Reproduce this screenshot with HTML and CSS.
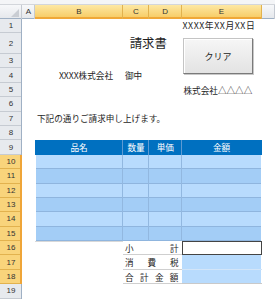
FILE: index.html
```html
<!doctype html>
<html>

<head>
	<meta charset="utf-8">
	<title>請求書</title>
	<link rel="stylesheet" href="styles.css">
</head>

<body>
	<div class="sheet">
		<div class="top-strip"></div>
		<table class="grid">
			<colgroup>
				<col class="w-head"><col class="w-a"><col class="w-b"><col class="w-c"><col class="w-d"><col class="w-e"><col>
			</colgroup>
			<!-- column letters -->
			<tr class="head-row">
				<th class="corner"><svg width="22" height="14" viewBox="0 0 22 14"><polygon points="19,4 19,12 11,12" fill="#c9cdd3"/></svg></th>
				<th>A</th>
				<th class="sel">B</th>
				<th class="sel">C</th>
				<th class="sel">D</th>
				<th class="sel">E</th>
				<th></th>
			</tr>
			<tr>
				<th class="num">1</th><td></td><td></td><td></td><td></td>
				<td class="date">XXXX年XX月XX日</td><td></td>
			</tr>
			<tr class="tall">
				<th class="num">2</th><td></td>
				<td colspan="4" class="title">請求書</td><td></td>
			</tr>
			<tr>
				<th class="num">3</th><td></td><td></td><td></td><td></td><td></td><td></td>
			</tr>
			<tr>
				<th class="num">4</th><td></td>
				<td class="client">XXXX株式会社</td>
				<td colspan="2">御中</td><td></td><td></td>
			</tr>
			<tr>
				<th class="num">5</th><td></td><td></td><td></td><td></td>
				<td>株式会社△△△△</td><td></td>
			</tr>
			<tr>
				<th class="num">6</th><td></td><td></td><td></td><td></td><td></td><td></td>
			</tr>
			<tr>
				<th class="num">7</th><td></td>
				<td colspan="4">下記の通りご請求申し上げます。</td><td></td>
			</tr>
			<tr>
				<th class="num">8</th><td></td><td></td><td></td><td></td><td></td><td></td>
			</tr>
			<!-- invoice table -->
			<tr>
				<th class="num">9</th><td></td>
				<td class="tbl-head">品名</td>
				<td class="tbl-head">数量</td>
				<td class="tbl-head">単価</td>
				<td class="tbl-head last">金額</td><td></td>
			</tr>
			<tr class="light">
				<th class="num sel">10</th><td></td>
				<td class="item first"></td><td class="item"></td><td class="item"></td><td class="item last"></td><td></td>
			</tr>
			<tr class="dark">
				<th class="num sel">11</th><td></td>
				<td class="item first"></td><td class="item"></td><td class="item"></td><td class="item last"></td><td></td>
			</tr>
			<tr class="light">
				<th class="num sel">12</th><td></td>
				<td class="item first"></td><td class="item"></td><td class="item"></td><td class="item last"></td><td></td>
			</tr>
			<tr class="dark">
				<th class="num sel">13</th><td></td>
				<td class="item first"></td><td class="item"></td><td class="item"></td><td class="item last"></td><td></td>
			</tr>
			<tr class="light">
				<th class="num sel">14</th><td></td>
				<td class="item first"></td><td class="item"></td><td class="item"></td><td class="item last"></td><td></td>
			</tr>
			<tr class="dark">
				<th class="num sel">15</th><td></td>
				<td class="item first"></td><td class="item"></td><td class="item"></td><td class="item last"></td><td></td>
			</tr>
			<!-- totals -->
			<tr>
				<th class="num sel">16</th><td></td>
				<td class="under-table"></td>
				<td colspan="2" class="label"><div class="spread"><span>小</span><span>計</span></div></td>
				<td class="active-cell"></td><td></td>
			</tr>
			<tr>
				<th class="num sel">17</th><td></td><td></td>
				<td colspan="2" class="label"><div class="spread"><span>消</span><span>費</span><span>税</span></div></td>
				<td class="total"></td><td></td>
			</tr>
			<tr>
				<th class="num sel">18</th><td></td><td></td>
				<td colspan="2" class="label"><div class="spread"><span>合</span><span>計</span><span>金</span><span>額</span></div></td>
				<td class="total bottom"></td><td></td>
			</tr>
			<tr>
				<th class="num">19</th><td></td><td></td><td></td><td></td><td></td><td></td>
			</tr>
		</table>

		<!-- form button floating over the cells -->
		<div class="btn-clear">クリア</div>
	</div>
</body>

</html>
```

FILE: styles.css
```css
* { margin: 0; padding: 0; box-sizing: border-box; }
body { width: 275px; height: 300px; overflow: hidden; background: #fff; font-family: "Noto Sans CJK JP", sans-serif; font-size: 8.6px; color: #1e1e1e; }
.sheet { position: relative; }
.top-strip { height: 5px; background: #f4f5f7; box-shadow: inset 0 -1px #d3d6db; }

.grid { width: 275px; table-layout: fixed; border-spacing: 0; }
.w-head { width: 22px; }
.w-a { width: 13px; }
.w-b { width: 88px; }
.w-c { width: 26px; }
.w-d { width: 32.5px; }
.w-e { width: 80px; }
.grid tr { height: 14.4px; }
.grid tr.tall { height: 20.6px; }
.grid td, .grid th { padding: 0 2px; white-space: nowrap; font-weight: normal; vertical-align: middle; text-align: left; line-height: 1; }

/* headers */
.head-row { height: 14px !important; }
.head-row th { text-align: center; font-family: "Liberation Sans", sans-serif; font-size: 8px; color: #333; background: linear-gradient(#f7f8fa, #e4e7eb); box-shadow: inset -1px 0 #c5cad2, inset 0 -1px #9fb0c4; }
.head-row th.sel { background: linear-gradient(#fde8a4, #f6c95f); box-shadow: inset -1px 0 #e2b24e, inset 0 -2px #f0a838; }
.head-row th.corner { padding: 0; }
.head-row th.corner svg { display: block; }
.grid th.num { text-align: center; font-family: "Liberation Sans", sans-serif; font-size: 8px; color: #333; background: #e7eaee; box-shadow: inset -1px 0 #9fb0c4, inset 0 -1px #c6cbd2; }
.grid th.num.sel { background: #f9d47b; box-shadow: inset -2px 0 #efa538, inset 0 -1px #e2b24e; }

/* top part */
.date { font-size: 8.8px; letter-spacing: 0.55px; padding-left: 1px !important; }
.title { text-align: center !important; font-size: 12.4px; }
.client { text-align: right !important; padding-right: 10px !important; }

/* invoice table */
.tbl-head { background: #0070c0; color: #fff; text-align: center !important; font-weight: bold; box-shadow: inset -1px 0 #5d9ad3; }
.tbl-head.last { box-shadow: none; }
.item { box-shadow: inset -1px 0 #92b8e0, inset 0 -1px #8fb5de; }
.item.first { box-shadow: inset 1px 0 #fff, inset -1px 0 #92b8e0, inset 0 -1px #8fb5de; }
.item.last { box-shadow: inset -1px 0 #fff, inset 0 -1px #8fb5de; }
.light .item { background: #b8dbfd; }
.dark .item { background: #a3cdf6; }
.under-table { box-shadow: inset 0 1px #d8d8d8; }

/* totals */
.label { box-shadow: inset 0 -1px #cfcfcf; padding: 0 3px 0 2px !important; }
.spread { display: flex; justify-content: space-between; }
.active-cell { background: #fff; box-shadow: inset 0 0 0 1px #444; }
.total { background: #b8dbfd; box-shadow: inset 0 -1px #d3e5f8, inset -1px 0 #fff; }
.total.bottom { box-shadow: inset 0 -1px #c9c9c9, inset -1px 0 #fff; }

/* clear button */
.btn-clear { position: absolute; left: 183px; top: 38px; width: 70px; height: 36px; display: flex; align-items: center; justify-content: center; font-size: 9px; color: #222; background: linear-gradient(#f6f6f6, #e3e3e3); border: 1px solid #c4c4c4; border-right-color: #7a7a7a; border-bottom-color: #7a7a7a; box-shadow: inset 1px 1px #fff, 1px 1px #c8c8c8; }
```
